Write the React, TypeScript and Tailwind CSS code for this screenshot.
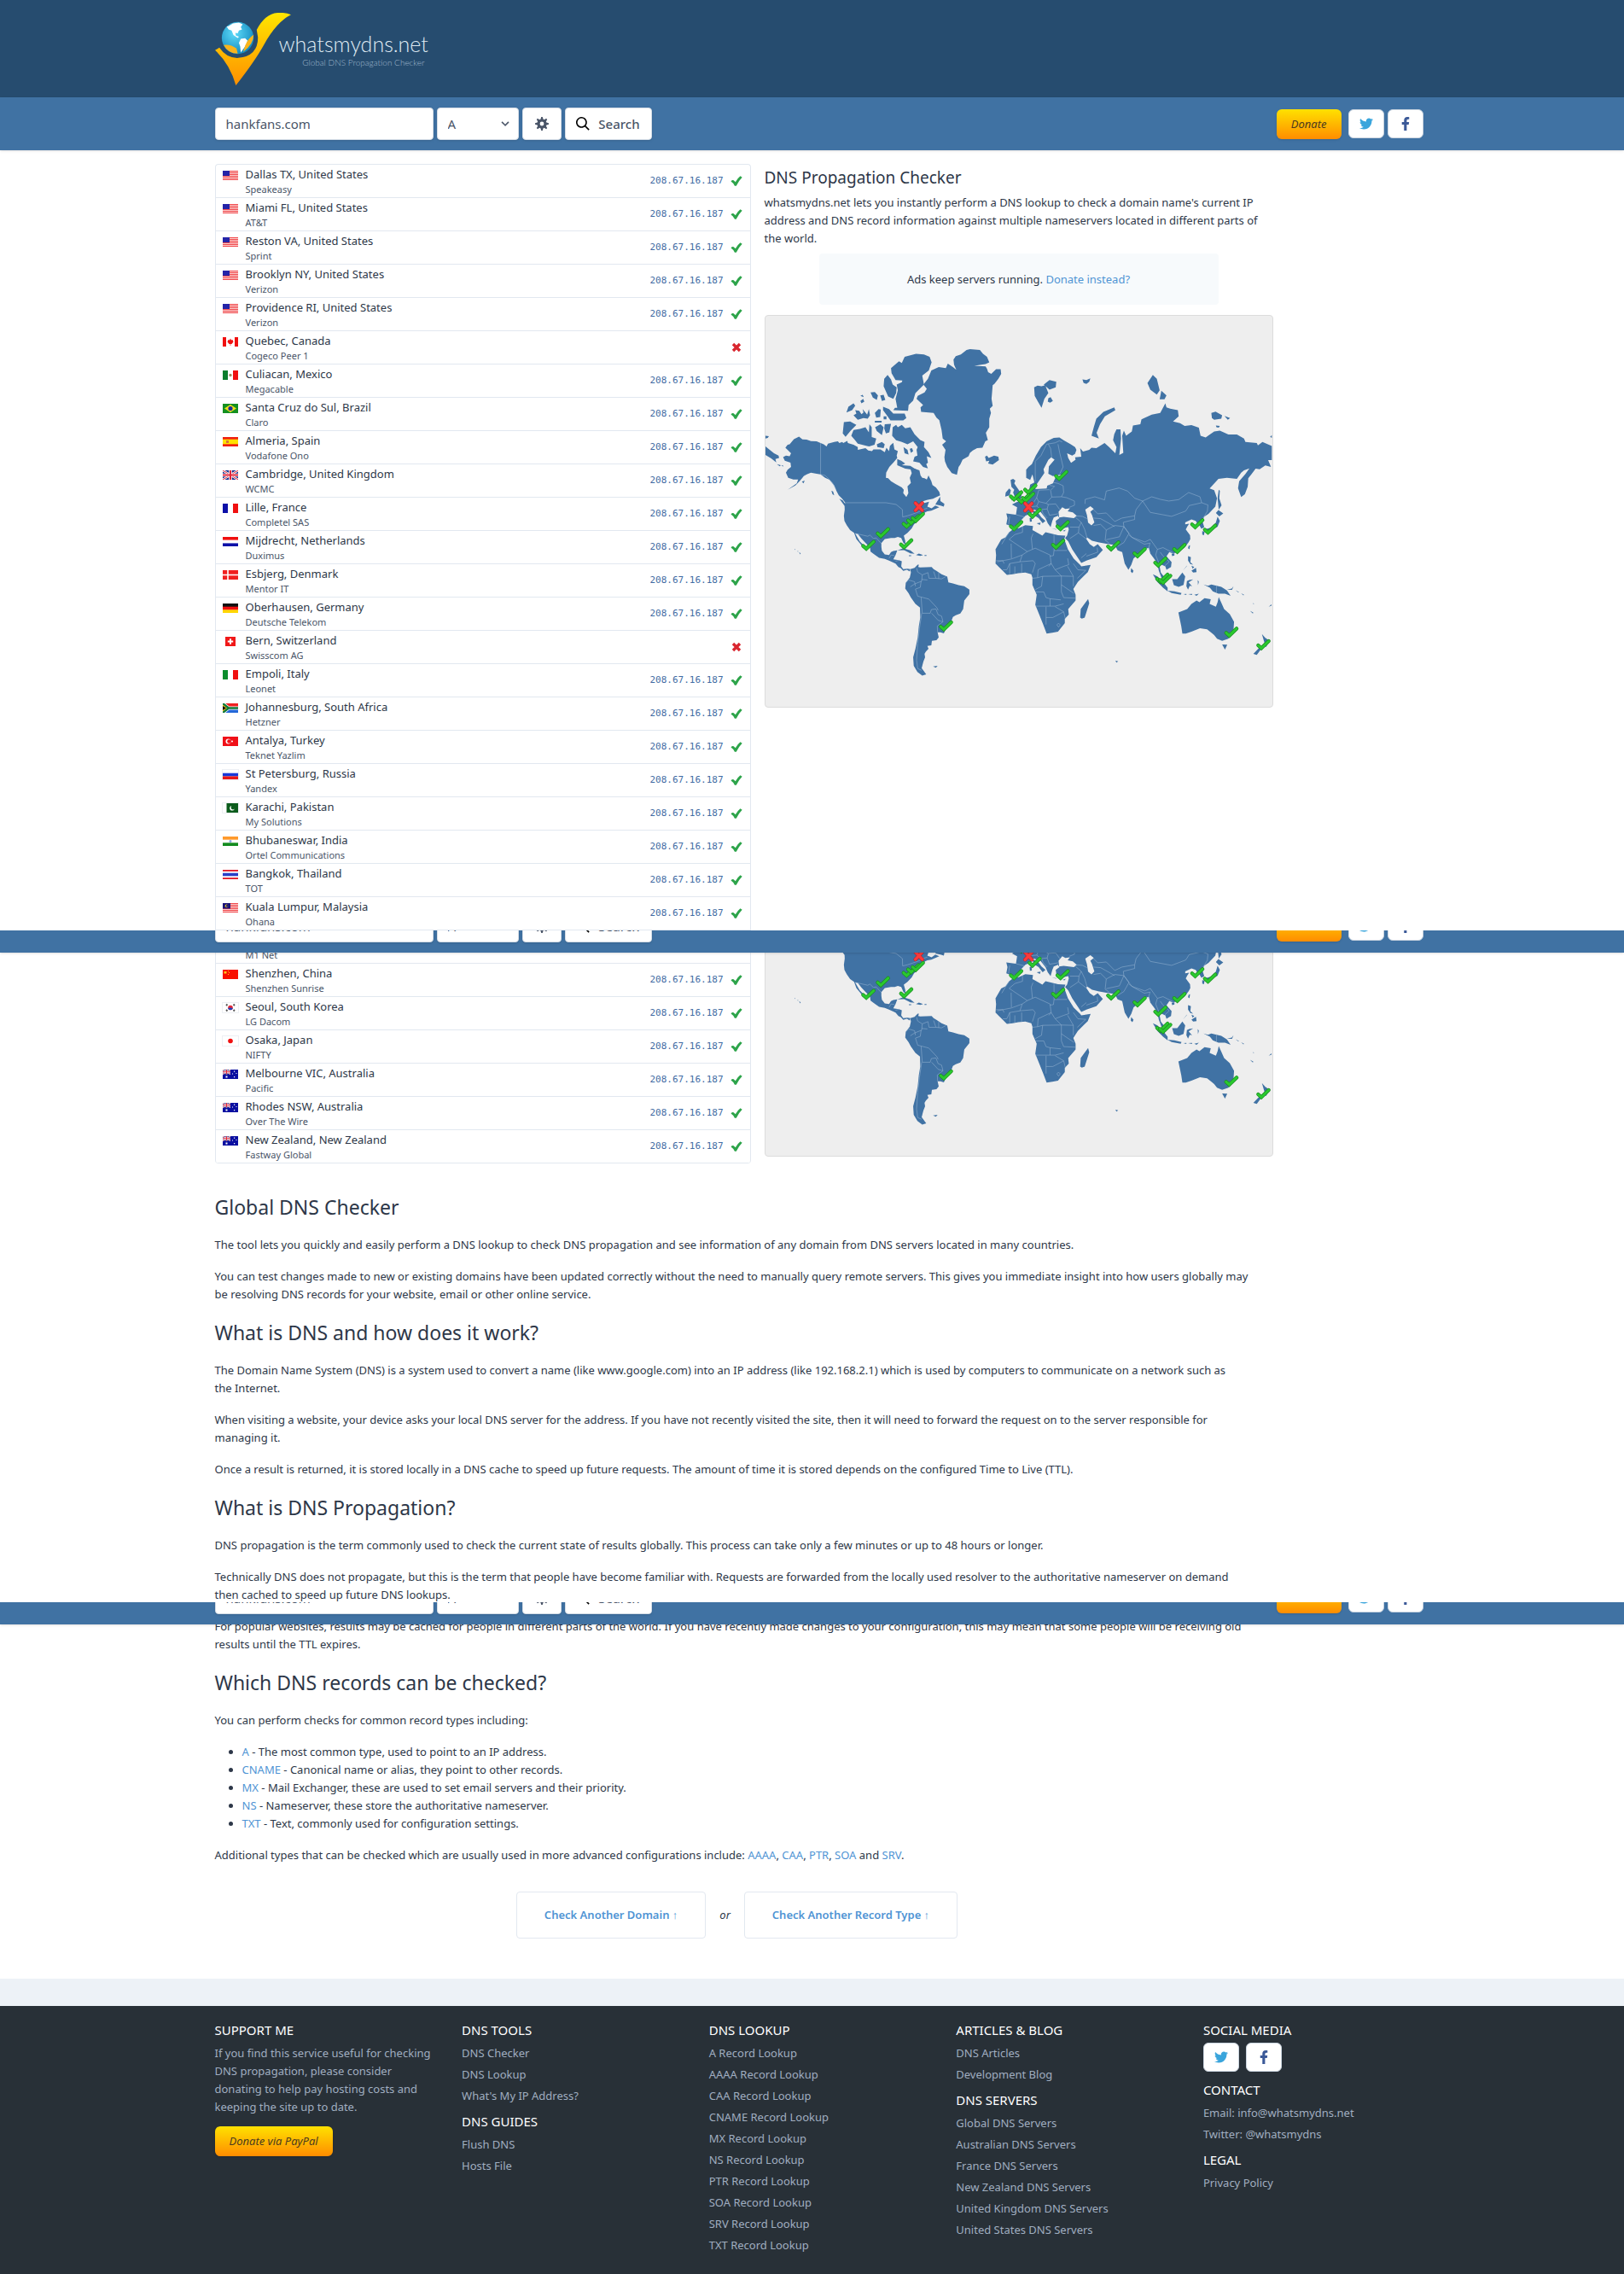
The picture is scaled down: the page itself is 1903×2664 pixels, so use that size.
import type { ReactNode } from "react";
import { FaFacebookF, FaTwitter } from "react-icons/fa";

const IP = "208.67.16.187";

type Server = { flag: string; place: string; isp: string; ok?: boolean };

const firstServers: Server[] = [
  { flag: "us", place: "Dallas TX, United States", isp: "Speakeasy" },
  { flag: "us", place: "Miami FL, United States", isp: "AT&T" },
  { flag: "us", place: "Reston VA, United States", isp: "Sprint" },
  { flag: "us", place: "Brooklyn NY, United States", isp: "Verizon" },
  { flag: "us", place: "Providence RI, United States", isp: "Verizon" },
  { flag: "ca", place: "Quebec, Canada", isp: "Cogeco Peer 1", ok: false },
  { flag: "mx", place: "Culiacan, Mexico", isp: "Megacable" },
  { flag: "br", place: "Santa Cruz do Sul, Brazil", isp: "Claro" },
  { flag: "es", place: "Almeria, Spain", isp: "Vodafone Ono" },
  { flag: "gb", place: "Cambridge, United Kingdom", isp: "WCMC" },
  { flag: "fr", place: "Lille, France", isp: "Completel SAS" },
  { flag: "nl", place: "Mijdrecht, Netherlands", isp: "Duximus" },
  { flag: "dk", place: "Esbjerg, Denmark", isp: "Mentor IT" },
  { flag: "de", place: "Oberhausen, Germany", isp: "Deutsche Telekom" },
  { flag: "ch", place: "Bern, Switzerland", isp: "Swisscom AG", ok: false },
  { flag: "it", place: "Empoli, Italy", isp: "Leonet" },
  { flag: "za", place: "Johannesburg, South Africa", isp: "Hetzner" },
  { flag: "tr", place: "Antalya, Turkey", isp: "Teknet Yazlim" },
  { flag: "ru", place: "St Petersburg, Russia", isp: "Yandex" },
  { flag: "pk", place: "Karachi, Pakistan", isp: "My Solutions" },
  { flag: "in", place: "Bhubaneswar, India", isp: "Ortel Communications" },
  { flag: "th", place: "Bangkok, Thailand", isp: "TOT" },
  { flag: "my", place: "Kuala Lumpur, Malaysia", isp: "Ohana" },
];

const lastServers: Server[] = [
  { flag: "sg", place: "Singapore", isp: "M1 Net" },
  { flag: "cn", place: "Shenzhen, China", isp: "Shenzhen Sunrise" },
  { flag: "kr", place: "Seoul, South Korea", isp: "LG Dacom" },
  { flag: "jp", place: "Osaka, Japan", isp: "NIFTY" },
  { flag: "au", place: "Melbourne VIC, Australia", isp: "Pacific" },
  { flag: "au", place: "Rhodes NSW, Australia", isp: "Over The Wire" },
  { flag: "nz", place: "New Zealand, New Zealand", isp: "Fastway Global" },
];

const unionJack = (
  <>
    <path fill="#1a2f8a" d="M0 0h18v11H0z" />
    <path stroke="#fff" strokeWidth="2.4" d="M0 0l18 11M18 0L0 11" />
    <path stroke="#e0283c" strokeWidth="1" d="M0 0l18 11M18 0L0 11" />
    <path stroke="#fff" strokeWidth="3.6" d="M9 0v11M0 5.5h18" />
    <path stroke="#e0283c" strokeWidth="2" d="M9 0v11M0 5.5h18" />
  </>
);

const southern = (
  <>
    <path fill="#0a0fa0" d="M0 0h18v11H0z" />
    <g transform="scale(.5)">{unionJack}</g>
    <path fill="#fff" d="M3.5 7.5h2v2h-2zM13 1.500h1.200v1.200h-1.200zM15.500 4h1v1h-1zM11 4.500h1v1h-1zM13 8h1.200v1.200h-1.200z" />
  </>
);

const flags: Record<string, ReactNode> = {
  us: (
    <>
      <path fill="#fbd0d0" d="M0 0h18v11H0z" />
      <path stroke="#f0474a" strokeWidth="1" d="M0 .5h18M0 2.500h18M0 4.500h18M0 6.500h18M0 8.500h18M0 10.500h18" />
      <path fill="#2424a8" d="M0 0h8v6H0z" />
    </>
  ),
  ca: (
    <>
      <path fill="#fff" d="M0 0h18v11H0z" />
      <path fill="#f01010" d="M0 0h4v11H0zM14 0h4v11h-4zM9 1.500l1 2 1.500-.5 1 2.500-2 2.500H9.300v2h-.6v-2H7.500l-2-2.500 1-2.500L8 3.500z" />
    </>
  ),
  mx: (
    <>
      <path fill="#fff" d="M0 0h18v11H0z" />
      <path fill="#0b7d2c" d="M0 0h6v11H0z" />
      <path fill="#f01010" d="M12 0h6v11h-6z" />
      <circle cx="9" cy="5.500" r="1.700" fill="#a08a5c" />
    </>
  ),
  br: (
    <>
      <path fill="#149020" d="M0 0h18v11H0z" />
      <path fill="#f5e21b" d="M9 1l7 4.500L9 10 2 5.500z" />
      <circle cx="9" cy="5.500" r="2.600" fill="#1c2f9a" />
    </>
  ),
  es: (
    <>
      <path fill="#f02010" d="M0 0h18v11H0z" />
      <path fill="#ffe000" d="M0 2.700h18v5.600H0z" />
      <path fill="#d8743c" d="M4 4h3v3H4z" />
    </>
  ),
  gb: unionJack,
  fr: (
    <>
      <path fill="#fff" d="M0 0h18v11H0z" />
      <path fill="#0d10a8" d="M0 0h6v11H0z" />
      <path fill="#f01010" d="M12 0h6v11h-6z" />
    </>
  ),
  nl: (
    <>
      <path fill="#fff" d="M0 0h18v11H0z" />
      <path fill="#f01010" d="M0 0h18v3.600H0z" />
      <path fill="#0d10a8" d="M0 7.400h18V11H0z" />
    </>
  ),
  dk: (
    <>
      <path fill="#f02020" d="M0 0h18v11H0z" />
      <path stroke="#fff" strokeWidth="1.600" d="M6 0v11M0 5.500h18" />
    </>
  ),
  de: (
    <>
      <path fill="#111" d="M0 0h18v4H0z" />
      <path fill="#f01010" d="M0 3.700h18v4H0z" />
      <path fill="#ffd600" d="M0 7.400h18V11H0z" />
    </>
  ),
  ch: (
    <>
      <path fill="#f01818" d="M3 0h12v11H3z" />
      <path stroke="#fff" strokeWidth="2" d="M9 2.300v6.400M5.800 5.500h6.400" />
    </>
  ),
  it: (
    <>
      <path fill="#fff" d="M0 0h18v11H0z" />
      <path fill="#0b8d2c" d="M0 0h6v11H0z" />
      <path fill="#f01010" d="M12 0h6v11h-6z" />
    </>
  ),
  za: (
    <>
      <path fill="#f02020" d="M0 0h18v5H0z" />
      <path fill="#2468d8" d="M0 6h18v5H0z" />
      <path fill="none" stroke="#fff" strokeWidth="4" d="M0 0l7 5.500H18M0 11l7-5.500" />
      <path fill="#ffc800" d="M0 1.500l6 4-6 4z" />
      <path fill="none" stroke="#107838" strokeWidth="2.400" d="M0 0l7 5.500H18M0 11l7-5.500" />
      <path fill="#111" d="M0 3l4 2.500L0 8z" />
    </>
  ),
  tr: (
    <>
      <path fill="#f01018" d="M0 0h18v11H0z" />
      <circle cx="6.500" cy="5.500" r="3" fill="#fff" />
      <circle cx="7.500" cy="5.500" r="2.300" fill="#f01018" />
      <circle cx="11" cy="5.500" r="1" fill="#fff" />
    </>
  ),
  ru: (
    <>
      <path fill="#fff" d="M0 0h18v11H0z" />
      <path fill="#1838d8" d="M0 3.700h18v3.700H0z" />
      <path fill="#e81818" d="M0 7.400h18V11H0z" />
    </>
  ),
  pk: (
    <>
      <path fill="#fff" d="M0 0h18v11H0z" />
      <path fill="#0c5c1c" d="M4.500 0H18v11H4.500z" />
      <circle cx="11" cy="5.800" r="2.800" fill="#fff" />
      <circle cx="12" cy="5" r="2.400" fill="#0c5c1c" />
    </>
  ),
  in: (
    <>
      <path fill="#fff" d="M0 0h18v11H0z" />
      <path fill="#ff9a2c" d="M0 0h18v3.700H0z" />
      <path fill="#148c20" d="M0 7.300h18V11H0z" />
      <circle cx="9" cy="5.500" r="1.500" fill="#8aa8e0" />
    </>
  ),
  th: (
    <>
      <path fill="#e01828" d="M0 0h18v11H0z" />
      <path fill="#fff" d="M0 1.800h18v7.400H0z" />
      <path fill="#2840c8" d="M0 3.700h18v3.600H0z" />
    </>
  ),
  my: (
    <>
      <path fill="#fbd0d0" d="M0 0h18v11H0z" />
      <path stroke="#f0474a" strokeWidth="1" d="M0 .5h18M0 2.500h18M0 4.500h18M0 6.500h18M0 8.500h18M0 10.500h18" />
      <path fill="#1a1478" d="M0 0h9v6.500H0z" />
      <circle cx="4.500" cy="3.200" r="1.800" fill="#f0d020" />
      <circle cx="5.200" cy="3.200" r="1.300" fill="#1a1478" />
    </>
  ),
  sg: (
    <>
      <path fill="#fff" d="M0 0h18v11H0z" />
      <path fill="#f01010" d="M0 0h18v5.500H0z" />
    </>
  ),
  cn: (
    <>
      <path fill="#f81000" d="M0 0h18v11H0z" />
      <path fill="#ffc820" d="M1.500 2h3v2.500h-3zM6 1h1v1H6zM7 3h1v1H7zM6 5h1v1H6z" />
    </>
  ),
  kr: (
    <>
      <path fill="#fff" d="M0 0h18v11H0z" />
      <path stroke="#555" strokeWidth="1.800" d="M4 3l1.500-1.500M12.500 1.500L14 3M4 8l1.500 1.500M14 8l-1.500 1.500" />
      <circle cx="9" cy="5.500" r="2.800" fill="#e02838" />
      <path fill="#2040b8" d="M6.200 5.500a2.800 2.800 0 0 0 5.600 0c-1.400 1.400-1.400 0-2.800 0S7.600 6.500 6.200 5.500z" />
    </>
  ),
  jp: (
    <>
      <path fill="#fff" d="M0 0h18v11H0z" />
      <circle cx="9" cy="5.500" r="2.800" fill="#f01010" />
    </>
  ),
  au: southern,
  nz: southern,
};

function Flag({ code }: { code: string }) {
  const pale = ["jp", "kr", "ru", "pk"].includes(code);
  return (
    <svg
      viewBox="0 0 18 11"
      className={pale ? "h-[11px] w-[18px] outline outline-[#edf0f4]" : "h-[11px] w-[18px]"}
      aria-hidden="true"
    >
      {flags[code]}
    </svg>
  );
}

function ServerTable({ servers, label }: { servers: Server[]; label: string }) {
  return (
    <table className="w-full shrink-0 border-separate border-spacing-0" aria-label={label}>
      <tbody>
        {servers.map((s) => (
          <tr key={s.place} className="h-[39px]">
            <td className="w-[35px] border-b border-[#e2e8f0] pt-[7px] pl-2 align-top">
              <Flag code={s.flag} />
            </td>
            <td className="border-b border-[#e2e8f0] text-[#2d3748]">
              <p className="text-[13px] leading-[19px]">{s.place}</p>
              <p className="text-[11px] leading-4 text-[#4a5568]">{s.isp}</p>
            </td>
            <td className="border-b border-[#e2e8f0] pr-[9px] text-right">
              <div className="flex items-center justify-end gap-2">
                {s.ok !== false && (
                  <span className="font-['DejaVu_Sans_Mono',monospace] text-[11px] leading-4 text-[#416ba3]">{IP}</span>
                )}
                {s.ok === false ? (
                  <svg viewBox="0 0 14 14" className="size-[14px]" role="img" aria-label="Failed">
                    <path d="M3 3l8 8M11 3l-8 8" stroke="#d9262f" strokeWidth="3.400" />
                  </svg>
                ) : (
                  <svg viewBox="0 0 14 14" className="size-[14px]" role="img" aria-label="Resolved">
                    <path fill="#2da44a" d="M.5 7.500q1.500-2 3.200-1.200L5.800 8.200Q8.500 3.500 11.500 1.200l2.200 1.600Q9.500 7 6.800 12.800H4.900Q3 9 .5 7.500z" />
                  </svg>
                )}
              </div>
            </td>
          </tr>
        ))}
      </tbody>
    </table>
  );
}

const americas = [
  "M90 372L98 362 105 360 120 342 138 333 150 343 165 344 180 349 200 350 214 356 225 360 235 368 240 358 262 352 275 350 280 356 290 352 294 356 308 348 310 356 330 362 345 370 345 380 372 374 382 382 395 384 400 378 425 378 440 388 446 372 455 384 458 366 462 362 470 355 474 378 486 384 482 400 484 408 470 425 456 440 445 460 444 478 452 480 462 490 478 500 500 512 507 520 505 532 516 546 523 532 520 508 532 496 528 478 535 462 530 446 545 446 562 452 566 470 572 478 580 480 588 484 594 470 604 490 608 504 620 512 632 528 635 540 610 552 588 556 570 562 560 572 582 566 596 562 590 580 605 586 618 576 632 582 604 594 590 596 582 600 570 612 556 625 550 636 543 642 535 656 520 672 507 682 512 700 513 712 506 708 498 690 486 686 475 690 462 690 440 694 428 708 428 722 430 735 440 748 455 750 462 740 470 736 484 734 478 750 470 765 490 768 500 772 498 790 505 800 520 798 530 800 528 808 518 802 505 806 496 796 488 792 478 780 455 770 440 764 420 760 400 746 390 738 388 724 370 705 358 692 345 676 336 674 345 690 352 702 364 714 358 716 340 694 332 672 318 662 306 645 298 630 296 612 299 590 298 566 303 568 290 552 278 540 270 525 262 505 245 485 230 478 214 466 200 464 180 460 165 466 155 472 164 460 150 478 140 490 125 505 98 520 130 498 135 484 118 484 100 478 92 460 98 450 110 440 108 425 88 418 82 405 92 400 105 402 110 392z",
  "M552 200L556 190 580 178 588 165 576 150 592 130 604 100 630 88 655 92 662 76 680 88 692 98 684 80 682 62 690 50 708 44 728 28 740 25 775 28 786 42 800 52 808 72 795 78 755 84 795 86 800 94 804 106 815 112 832 96 848 96 850 112 840 130 826 148 820 152 816 200 820 225 810 235 814 250 808 270 808 300 796 320 803 345 794 350 784 372 765 374 750 382 740 390 735 402 714 414 706 432 700 440 694 468 676 462 660 440 652 420 650 405 654 380 642 362 656 350 644 340 640 310 632 275 622 266 612 250 568 246 566 230 575 222z",
  "M470 240L476 232 484 232 478 200 486 170 482 150 500 142 502 136 478 134 464 110 462 92 490 68 500 74 510 52 550 42 578 44 598 52 605 72 595 100 572 118 578 150 548 180 540 206 524 222 522 242z",
  "M450 116L438 130 436 156 452 192 470 200 480 180 482 160 468 150 462 132z",
  "M305 248L312 228 330 216 336 224 325 240zM330 258L340 252 336 240 350 242 358 254 365 248 362 236 378 256 384 236 388 258 380 270 365 268 345 274zM390 178L405 176 416 188 412 204 398 196zM424 188L436 186 442 204 430 208zM405 250L418 236 426 238 424 264 410 266zM434 228L455 236 470 252 510 252 516 268 505 276 460 276 450 262 434 240zM436 262h10v10h-10zM354 208l10-8 4 10-10 6zM354 190l8-4 4 8z",
  "M296 282L318 280 340 292 320 312 302 334 292 322zM322 330L330 310 352 306 372 300 384 318 386 290 394 300 394 335 410 340 404 362 385 368 345 358 335 345zM406 300L425 290 436 300 430 328 412 314zM440 290L462 288 456 318 444 322 438 305zM405 278h24v6h-24zM412 360L430 352 440 360 436 374 414 370z",
  "M468 300L480 292 486 300 500 292 512 304 530 300 545 325 565 345 580 352 578 370 594 388 604 408 588 402 592 425 586 430 592 445 575 440 562 425 540 420 545 404 555 400 552 380 556 370 540 350 520 360 500 352 480 346 466 330zM484 412L498 418 512 428 500 434 530 436 555 452 512 446 484 434zM506 370L520 380 524 396 510 392zM528 376l8-2 4 10-8 6z",
  "M618 572L635 544 636 560 650 570 648 580 636 576zM485 734L505 726 530 734 545 746 530 744 508 733zM550 750L560 745 575 750 565 753zM580 750h7v3h-7zM525 751h8v3h-8z",
  "M793 404L800 400 806 408 825 400 840 404 842 416 820 432 804 428 808 418 797 420z",
  "M20 368L35 380 50 392 66 400 68 408 55 412 58 424 40 410 20 398zM20 330l12 2-4 6-8 2zM60 430l14 4-4 4zM76 434l6 1v4zM148 492l10-4-4 10zM252 524l6 2 4 14-6-4zM280 552L292 558 304 575 298 577zM122 729l4 2-3 1zM132 736l4 1-2 2zM138 740l6 4-2 4z",
  "M530 800L545 795 556 784 560 784 558 792 565 794 605 792 612 800 622 806 640 818 660 826 664 846 680 850 700 856 720 860 738 872 738 888 720 910 716 940 706 956 690 962 680 968 672 990 658 1005 648 1026 636 1022 626 1022 630 1040 622 1050 606 1052 604 1068 590 1070 594 1080 585 1090 580 1098 582 1110 576 1125 570 1148 586 1170 572 1175 555 1162 542 1140 540 1110 548 1080 556 1040 560 1000 565 970 564 935 548 922 532 900 524 885 512 868 514 848 528 830 532 812z",
  "M610 1142L626 1140 620 1147z",
];

const americasBorders =
  "M214 356V466L230 470 245 484 256 496 268 520M303 566H444L480 572 502 590 503 616 520 612 538 606 560 598 575 590 590 585M336 674L380 684 388 680 400 692 410 690 428 710M455 762L462 750 474 752M478 772L492 768M514 848L524 838 545 844 548 860M530 862L545 852 570 842 572 820 556 810 552 796M572 820L592 812 596 832 620 832 612 808M620 832L640 834 655 826M630 812V834M570 836L590 838M548 870L556 895 568 898 572 955M548 870L565 864 568 842M568 898L595 905 624 936 628 945M572 955L600 955 604 942 620 940 628 960 640 965 645 985 628 980 605 955M645 985L625 1000 626 1022M570 955L562 1010 556 1060 552 1120 556 1150 570 1156";

const oldWorld = [
  "M218 360L226 350 238 340 252 310 270 280 290 260 315 248 335 246 350 256 375 270 390 280 395 290 390 304 380 310 362 302 366 318 376 336 392 324 390 316 412 314 408 284 418 296 440 290 448 282 465 284 494 266 510 280 532 302 536 280 524 256 528 235 536 218 550 218 552 250 548 290 546 308 560 300 556 240 562 222 570 240 590 225 594 204 620 200 624 182 660 166 690 160 708 126 712 140 725 145 752 150 755 172 735 190 760 196 776 206 800 203 826 212 832 240 850 246 880 225 900 222 930 236 960 236 985 250 990 262 1030 266 1034 274 1050 262 1083 276 1083 326 1070 326 1080 350 1060 345 1040 358 1026 356 1012 375 1000 390 998 420 988 446 975 456 964 425 968 400 990 375 1004 355 985 362 975 370 960 392 925 388 895 392 864 426 880 432 890 460 884 490 860 515 845 525 838 540 845 562 835 568 826 552 820 548 815 540 800 535 778 545 778 552 792 550 785 560 780 570 795 590 796 604 790 615 775 635 750 650 735 655 722 650 712 665 730 685 728 702 712 712 708 700 694 694 688 700 692 722 705 738 708 750 695 742 685 715 680 690 668 672 655 655 650 635 632 640 610 660 596 672 588 695 578 712 565 690 556 650 540 644 530 625 500 620 475 616 450 610 432 598 430 604 442 622 456 632 470 622 488 642 465 668 430 680 412 688 400 670 380 640 366 612 355 600 362 592 368 570 366 562 345 566 325 560 322 540 335 530 330 522 315 528 310 540 304 562 294 548 286 530 268 508 245 500 236 512 215 522 200 538 190 555 172 560 158 556 148 552 152 530 148 514 182 518 186 492 168 482 184 474 200 470 220 450 228 435 232 412 248 404 250 425 290 422 290 360 250 418 240 376 232 396 218 388z",
  "M178 565L190 566 215 555 242 558 240 572 246 575 262 584 275 592 286 580 305 584 330 590 356 592 352 604 365 640 385 672 408 695 412 700 445 695 435 720 400 755 384 780 392 800 392 820 366 850 368 870 354 885 354 900 330 930 310 934 290 937 278 905 264 870 250 835 255 800 240 765 240 740 236 728 215 722 190 724 170 728 150 730 125 705 110 690 112 660 110 640 130 605 145 598 158 580z",
  "M240 505L256 506 272 528 286 540 276 548 262 530 245 520zM255 548l14-2-3 8zM230 530l7-2 1 14-7 1zM308 566l16 3v2zM346 575l12-4-5 6z",
  "M163 396L172 392 180 398 176 408 184 420 202 445 200 462 165 468 178 455 172 440 176 430 166 420zM146 440L158 426 164 432 160 450 144 454z",
  "M246 70L258 64 272 66 285 62 296 90 282 110 272 142 258 118 248 100zM280 60L300 44 324 50 322 70 300 78zM296 108l8-4 8 14-10 6-8-4zM416 42L430 44 444 38 440 50 430 58 420 54zM448 240L456 210 465 180 490 156 528 140 532 150 495 172 478 200 466 230 474 250zM645 55L664 26 678 40 688 80 678 95 655 78zM688 112L694 82 712 98 705 112zM870 160L885 155 908 168 905 180 880 184 872 178zM916 170L936 178 928 184zM886 204l14 2-4 6-8-2zM1077 244l6-6v10z",
  "M896 430L900 434 898 460 906 485 896 500 892 460zM886 512L895 502 912 514 898 524zM892 525L900 540 892 560 870 572 850 580 846 570 875 562 886 545zM838 576l8 2-2 12-6-2zM790 628l5-2-2 14-5-4zM730 656l10-2v8l-8 2zM588 706L596 716 592 724 586 718z",
  "M664 728L680 735 700 755 716 775 716 788 700 775 680 755zM716 786L740 788 765 794 762 800 730 794zM772 798l10-1v4zM788 798l14-1v4zM810 800L826 796 818 804zM732 745L750 745 768 722 778 735 772 765 755 772 738 766zM784 752L792 748 806 746 790 756 802 770 794 768 788 782 782 770zM788 664L798 668 796 686 806 694 796 692 788 680zM800 715L816 705 818 720 806 722zM800 698l10 4-6 6zM770 715L784 697 783 700zM822 748l4 6-3 12z",
  "M842 764L858 768 870 764 905 772 925 785 938 804 918 796 895 796 875 788 865 775zM925 782L942 778 948 770 943 783zM938 766l8 6zM955 784l12 6-2 2zM975 795l10 5-2 2zM988 802l8 6zM1006 856l12 7-2 3zM1018 828v6h2zM1072 842l10-8v4z",
  "M754 862L785 850 800 832 818 820 828 826 846 812 868 816 864 832 886 842 892 826 896 808 906 830 915 850 935 868 950 895 948 925 930 955 908 962 890 955 880 942 872 935 855 922 830 918 800 930 780 937 768 937 764 910zM908 975L926 976 918 993zM1048 938L1060 952 1076 962 1062 985 1056 965zM1040 985L1046 990 1030 1012 1018 1008z",
  "M408 880L410 850 436 815 440 830 424 880 414 884zM532 1032l10 2-6 5z",
];

const inlandSeas = [
  "M248 428L258 422 272 405 285 384 279 358 296 325 306 316 318 324 298 348 296 374 312 382 345 376 320 390 312 408 292 416 290 426z",
  "M332 508L345 492 356 498 372 496 364 506 382 510 396 522 386 530 350 526 334 528z",
  "M426 500L444 488 456 498 444 508 450 520 458 545 448 556 436 546 432 520z",
];

const oldWorldBorders =
  "M250 400L250 330 270 310 290 270 320 265 335 258 345 262M308 318L304 285 296 270M330 270L336 300 348 350 336 374M312 404L330 408 348 416 350 440 342 455 308 456 304 432 318 418M300 415L318 418M300 430L262 432 255 458 262 472 288 478 308 456M255 458L244 475M262 472L255 488 232 490M255 488L270 500 292 498 296 482 288 478M296 482L322 480 336 500M292 498L300 520 330 515M342 455L360 458 388 470 388 485 370 492M272 500L278 515 292 530M182 518L212 526M160 524L156 552M392 522L416 524 432 532M392 528L412 545 404 562 372 562M404 562L402 582 372 602M402 582L430 604M412 545L424 570 432 598M455 556L480 552 500 572 496 608 510 618M500 572L530 556 562 560 546 596 500 606M562 560L580 584 562 616 540 630M425 480L426 464 460 455 494 466 500 435 545 424 575 435 600 460 628 470 605 500 600 522 555 530 530 542 500 512 470 515 455 500M455 530L480 532 530 560M628 470L660 455 690 464 720 470 755 465 790 440 830 455 836 476 858 484 856 506 838 535M628 470L655 510 730 524 780 505 792 486 836 476M600 522L600 535 560 545 562 560 590 598 636 614 655 605 680 640 700 634 735 652M580 590L600 604 634 622M634 622L654 618 648 640M680 640L674 660 686 690M690 650L700 664 722 684 706 698M430 664L470 650 468 634M412 670L430 655M888 766V794M205 560L205 580 178 588 158 605 222 648M242 585L236 600 240 640M158 580L145 600 132 622M165 620L166 672M222 648L204 660 166 674 116 684M240 640L222 648M240 640L250 636 302 660 306 690 298 700M316 588V644H362M316 644L314 662 302 664M204 660L196 684 160 690 150 712M112 680H136L140 690M196 684L242 680 250 690 240 722M160 690V728M178 700V726M202 690V722M150 712H136M306 690L320 712 350 700 368 694 364 672M306 690L260 712 258 740 240 742M320 712L342 734 384 735 384 770M384 690L400 712 428 714 398 742M364 700L384 735M258 740L276 735 342 734 342 790M276 735L272 770 250 782M250 790H280L288 810 302 814V840M302 814L340 818M342 765L386 795M342 790L350 810 392 812M250 840H320L350 832M288 842V905M288 880L312 880 350 860 320 842M350 860L356 885M326 906l6-6 6 6-6 8z";

type Pin = [number, number];

const americasPins: Pin[] = [[382, 716], [433, 672], [515, 711], [524, 638], [540, 626], [556, 618], [655, 1000]];
const oldWorldPins: Pin[] = [
  [341, 380], [232, 428], [182, 452], [208, 462], [224, 457], [247, 513], [182, 557], [346, 557], [330, 622], [524, 628],
  [617, 652], [690, 685], [757, 637], [697, 742], [707, 746], [820, 550], [865, 569], [940, 932], [1053, 976],
];

function CheckPin({ at }: { at: Pin }) {
  return (
    <g transform={`translate(${at[0]} ${at[1]})`} fill="none" strokeLinecap="round">
      <path d="M-18 2L-7 12 19-13" stroke="#1c8a22" strokeWidth="13" />
      <path d="M-18 2L-7 12 19-13" stroke="#2ac82e" strokeWidth="9" />
    </g>
  );
}

function CrossPin({ at }: { at: Pin }) {
  return (
    <g transform={`translate(${at[0]} ${at[1]})`} fill="none" strokeLinecap="round">
      <path d="M-12-13L12 13M12-13L-12 13" stroke="#b02226" strokeWidth="13" />
      <path d="M-12-13L12 13M12-13L-12 13" stroke="#fb3a3c" strokeWidth="10" />
    </g>
  );
}

function WorldMap() {
  return (
    <div className="w-full shrink-0 overflow-hidden rounded border border-[#dcdcdc] bg-[#eeeeee]">
      <svg viewBox="0 0 1785 1377" className="block w-full" role="img" aria-label="Map of DNS servers">
        <g transform="translate(-20 92)">
          {americas.map((d) => (
            <path key={d} d={d} fill="#4072a4" />
          ))}
          <path d={americasBorders} fill="none" stroke="#9dbad6" strokeWidth="1.500" />
        </g>
        <g transform="translate(700 182)">
          {oldWorld.map((d) => (
            <path key={d} d={d} fill="#4072a4" />
          ))}
          {inlandSeas.map((d) => (
            <path key={d} d={d} fill="#eeeeee" />
          ))}
          <path d={oldWorldBorders} fill="none" stroke="#9dbad6" strokeWidth="1.500" />
          {oldWorldPins.map((p) => (
            <CheckPin key={p.join()} at={p} />
          ))}
          <CrossPin at={[226, 491]} />
        </g>
        <g transform="translate(-20 92)">
          {americasPins.map((p) => (
            <CheckPin key={p.join()} at={p} />
          ))}
          <CrossPin at={[560, 580]} />
        </g>
      </svg>
    </div>
  );
}

function Logo() {
  return (
    <a href="#" className="flex items-start">
      <svg viewBox="34 45 248 254" preserveAspectRatio="none" className="h-[85px] w-[89px]" aria-hidden="true">
        <defs>
          <linearGradient id="tick" x1="0" y1="0" x2="0" y2="1">
            <stop offset="0" stopColor="#ffe600" />
            <stop offset="1" stopColor="#ff9000" />
          </linearGradient>
          <radialGradient id="globe" cx=".4" cy=".35" r=".7">
            <stop offset="0" stopColor="#5fdcfa" />
            <stop offset="1" stopColor="#0f86bd" />
          </radialGradient>
        </defs>
        <ellipse cx="108" cy="133" rx="52" ry="56" fill="url(#globe)" />
        <path fill="#fff" d="M78 92l14-10 20-3 12 6-6 10 4 8-10 4-4 10-8-2 2 10 10 4-4 4-14-10-6-16-10-4-6-10z" />
        <path fill="#fff" d="M118 136l14-2 8 8-4 16-10 14-8 12-2-22-4-12z" />
        <path fill="#f9b41c" d="M62 158q22-4 42 12l4 18q-32 0-46-30zM160 122q0 32-34 60l6-22q10-26 28-38z" />
        <path
          fill="url(#tick)"
          d="M34 176l14-9q24 38 62 36 64-6 64-72l-4-26q26-56 68-60 26-2 44 7-46 24-88 104-30 58-92 143-20-76-68-123z"
        />
      </svg>
      <div className="mt-[21px] -ml-[14px] w-[171px] font-['Lato',sans-serif] font-light text-[#dfe9f2]">
        <p className="text-[25px] leading-[31px]">whatsmydns.net</p>
        <p className="text-right text-[10px] leading-3 text-[#9fb6cb]">Global DNS Propagation Checker</p>
      </div>
    </a>
  );
}

const box = "rounded border border-[#d5dde6] bg-white shadow-sm";

function DonateButton({ children }: { children: ReactNode }) {
  return (
    <button className="h-[35px] rounded-md bg-gradient-to-b from-[#ffe100] to-[#ff8c00] px-[17px] text-[13px] italic text-[#4b3a1f] shadow">
      {children}
    </button>
  );
}

function SocialLinks() {
  return (
    <>
      <a href="#" aria-label="Twitter" className="flex h-[34px] w-[42px] items-center justify-center rounded-md border border-[#cbd5e0] bg-white text-[#3aa5dc]">
        <FaTwitter className="size-4" />
      </a>
      <a href="#" aria-label="Facebook" className="flex h-[34px] w-[42px] items-center justify-center rounded-md border border-[#cbd5e0] bg-white text-[#3b5998]">
        <FaFacebookF className="size-4" />
      </a>
    </>
  );
}

function SearchBar() {
  return (
    <div className="h-[62px] shrink-0 bg-[#4072a3] shadow">
      <div className="mx-auto flex h-full max-w-[1400px] items-center justify-between">
        <form className="flex gap-1 text-base text-[#4a5568]" onSubmit={(e) => e.preventDefault()}>
          <input aria-label="Domain" defaultValue="hankfans.com" className={`${box} h-[38px] w-[256px] px-3 text-[15px]`} />
          <div className="relative">
            <select aria-label="Record type" className={`${box} h-[38px] w-24 appearance-none px-3 text-[15px]`}>
              <option>A</option>
              <option>AAAA</option>
              <option>CNAME</option>
              <option>MX</option>
              <option>NS</option>
              <option>TXT</option>
            </select>
            <svg viewBox="0 0 20 20" fill="currentColor" className="pointer-events-none absolute top-[11px] right-2 size-4">
              <path d="M9.293 12.950l.707.707L15.657 8l-1.414-1.414L10 10.828 5.757 6.586 4.343 8z" />
            </svg>
          </div>
          <button type="button" aria-label="Settings" className={`${box} flex h-[38px] w-[46px] items-center justify-center`}>
            <svg viewBox="0 0 20 20" fill="currentColor" className="size-4">
              <path d="M3.940 6.500L2.220 3.640l1.420-1.420L6.500 3.940c.52-.3 1.100-.54 1.700-.7L9 0h2l.8 3.240c.6.160 1.180.4 1.700.7l2.860-1.720 1.420 1.420-1.720 2.860c.3.520.54 1.100.7 1.700L20 9v2l-3.240.8c-.16.600-.4 1.180-.7 1.700l1.720 2.860-1.420 1.420-2.860-1.720c-.52.300-1.100.54-1.700.7L11 20H9l-.8-3.240c-.6-.16-1.180-.4-1.700-.7l-2.860 1.720-1.420-1.420 1.720-2.860c-.3-.52-.54-1.100-.7-1.700L0 11V9l3.240-.8c.16-.6.4-1.180.7-1.700zM10 13a3 3 0 1 0 0-6 3 3 0 0 0 0 6z" />
            </svg>
          </button>
          <button className={`${box} flex h-[38px] w-[102px] items-center justify-center gap-[10px] text-[15px] font-medium`}>
            <svg viewBox="0 0 20 20" className="size-4 fill-black">
              <path d="M12.900 14.320a8 8 0 1 1 1.410-1.410l5.350 5.330-1.420 1.420-5.330-5.340zM8 14A6 6 0 1 0 8 2a6 6 0 0 0 0 12z" />
            </svg>
            Search
          </button>
        </form>
        <div className="-mr-4 flex items-center gap-1">
          <div className="mr-1">
            <DonateButton>Donate</DonateButton>
          </div>
          <SocialLinks />
        </div>
      </div>
    </div>
  );
}

// Only the lower edge of the bar shows
function PinnedBar() {
  return (
    <div className="relative z-10 flex h-[26px] flex-col justify-end [clip-path:inset(0_0_-8px_0)]">
      <SearchBar />
    </div>
  );
}

function A({ children }: { children: ReactNode }) {
  return (
    <a href="#" className="text-[#4f94d4]">
      {children}
    </a>
  );
}

const recordTypes = [
  ["A", "The most common type, used to point to an IP address."],
  ["CNAME", "Canonical name or alias, they point to other records."],
  ["MX", "Mail Exchanger, these are used to set email servers and their priority."],
  ["NS", "Nameserver, these store the authoritative nameserver."],
  ["TXT", "Text, commonly used for configuration settings."],
];

const H2 = ({ children }: { children: ReactNode }) => <h2 className="my-[19px] text-[23px] leading-[30px]">{children}</h2>;

function FooterGroup({ title, links }: { title: string; links: string[] }) {
  return (
    <div className="mb-[2px]">
      <h3 className="text-[15px] leading-[30px] text-white uppercase">{title}</h3>
      <ul>
        {links.map((l) => (
          <li key={l} className="leading-[25px]">
            <a href="#">{l}</a>
          </li>
        ))}
      </ul>
    </div>
  );
}

const lookups = ["A", "AAAA", "CAA", "CNAME", "MX", "NS", "PTR", "SOA", "SRV", "TXT"];

export default function App() {
  return (
    <div className="bg-white font-['Noto_Sans',sans-serif] text-[13px] leading-[21px] text-[#2d3748]">
      <header className="bg-[#264c6f]">
        <div className="mx-auto h-[114px] max-w-[1400px] pt-[15px]">
          <Logo />
        </div>
      </header>
      <SearchBar />

      <div className="mx-auto max-w-[1400px] pt-4 pr-[160px]">
        <div className="flex gap-4">
          <div className="min-w-0 flex-1 rounded-t border border-b-0 border-[#e2e8f0]">
            <ServerTable servers={firstServers} label="Results" />
          </div>
          <div className="w-[596px]">
            <h1 className="text-[19px] leading-8">DNS Propagation Checker</h1>
            <p className="mt-[3px] mb-[7px]">
              whatsmydns.net lets you instantly perform a DNS lookup to check a domain name's current IP address and DNS record
              information against multiple nameservers located in different parts of the world.
            </p>
            <div className="mx-auto mb-3 flex h-[60px] w-[468px] items-center justify-center rounded bg-[#f7fafc]">
              <p>
                Ads keep servers running. <A>Donate instead?</A>
              </p>
            </div>
            <WorldMap />
          </div>
        </div>
      </div>

      <PinnedBar />

      <main className="mx-auto max-w-[1400px] pr-[160px]">
        <div className="flex items-start gap-4">
          <div className="flex h-[247px] min-w-0 flex-1 flex-col justify-end overflow-hidden rounded-b border border-y-0 border-[#e2e8f0]">
            <ServerTable servers={lastServers} label="More results" />
          </div>
          <div className="flex h-[239px] w-[596px] flex-col justify-end overflow-hidden">
            <WorldMap />
          </div>
        </div>

        <article className="-mb-[2px] pt-[17px]">
          <H2>Global DNS Checker</H2>
          <p>
            The tool lets you quickly and easily perform a DNS lookup to check DNS propagation and see information of any domain
            from DNS servers located in many countries.
          </p>
          <p className="mt-4">
            You can test changes made to new or existing domains have been updated correctly without the need to manually query
            remote servers. This gives you immediate insight into how users globally may
            <br />
            be resolving DNS records for your website, email or other online service.
          </p>
          <H2>What is DNS and how does it work?</H2>
          <p>
            The Domain Name System (DNS) is a system used to convert a name (like www.google.com) into an IP address (like
            192.168.2.1) which is used by computers to communicate on a network such as
            <br />
            the Internet.
          </p>
          <p className="mt-4">
            When visiting a website, your device asks your local DNS server for the address. If you have not recently visited the
            site, then it will need to forward the request on to the server responsible for
            <br />
            managing it.
          </p>
          <p className="mt-4">
            Once a result is returned, it is stored locally in a DNS cache to speed up future requests. The amount of time it is
            stored depends on the configured Time to Live (TTL).
          </p>
          <H2>What is DNS Propagation?</H2>
          <p>
            DNS propagation is the term commonly used to check the current state of results globally. This process can take only a
            few minutes or up to 48 hours or longer.
          </p>
          <p className="mt-4">
            Technically DNS does not propagate, but this is the term that people have become familiar with. Requests are forwarded
            from the locally used resolver to the authoritative nameserver on demand
            <br />
            then cached to speed up future DNS lookups.
          </p>
        </article>
      </main>

      <PinnedBar />

      <section className="mx-auto max-w-[1400px] pr-[160px] pb-[47px]">
        <div className="flex h-[34px] flex-col justify-end">
          <p>
            For popular websites, results may be cached for people in different parts of the world. If you have recently made
            changes to your configuration, this may mean that some people will be receiving old results until the TTL expires.
          </p>
        </div>
        <H2>Which DNS records can be checked?</H2>
        <p>You can perform checks for common record types including:</p>
        <ul className="my-4 list-disc pl-8">
          {recordTypes.map(([name, text]) => (
            <li key={name}>
              <A>{name}</A> - {text}
            </li>
          ))}
        </ul>
        <p>
          Additional types that can be checked which are usually used in more advanced configurations include: <A>AAAA</A>,{" "}
          <A>CAA</A>, <A>PTR</A>, <A>SOA</A> and <A>SRV</A>.
        </p>
        <div className="mt-8 flex items-center justify-center gap-4 pr-4">
          <a href="#" className="rounded border border-[#e2e8f0] px-8 py-4 font-semibold text-[#4f94d4]">
            Check Another Domain ↑
          </a>
          <em>or</em>
          <a href="#" className="rounded border border-[#e2e8f0] px-8 py-4 font-semibold text-[#4f94d4]">
            Check Another Record Type ↑
          </a>
        </div>
      </section>

      <footer className="border-t-[32px] border-[#edf2f7] bg-[#283037] text-[#a0aec0]">
        <div className="mx-auto max-w-[1400px] pt-[13px] pb-[22px]">
          <div className="-mr-12 grid grid-cols-5">
            <div className="pr-7">
              <h3 className="text-[15px] leading-[30px] text-white uppercase">Support me</h3>
              <p className="mt-[2px] mb-3">
                If you find this service useful for checking DNS propagation, please consider donating to help pay hosting costs
                and keeping the site up to date.
              </p>
              <DonateButton>Donate via PayPal</DonateButton>
            </div>
            <div>
              <FooterGroup title="DNS Tools" links={["DNS Checker", "DNS Lookup", "What's My IP Address?"]} />
              <FooterGroup title="DNS Guides" links={["Flush DNS", "Hosts File"]} />
            </div>
            <FooterGroup title="DNS Lookup" links={lookups.map((l) => `${l} Record Lookup`)} />
            <div>
              <FooterGroup title="Articles & Blog" links={["DNS Articles", "Development Blog"]} />
              <FooterGroup
                title="DNS Servers"
                links={[
                  "Global DNS Servers",
                  "Australian DNS Servers",
                  "France DNS Servers",
                  "New Zealand DNS Servers",
                  "United Kingdom DNS Servers",
                  "United States DNS Servers",
                ]}
              />
            </div>
            <div>
              <h3 className="text-[15px] leading-[30px] text-white uppercase">Social Media</h3>
              <div className="mb-[6px] flex gap-2">
                <SocialLinks />
              </div>
              <FooterGroup title="Contact" links={["Email: info@whatsmydns.net", "Twitter: @whatsmydns"]} />
              <FooterGroup title="Legal" links={["Privacy Policy"]} />
            </div>
          </div>
        </div>
      </footer>
    </div>
  );
}
